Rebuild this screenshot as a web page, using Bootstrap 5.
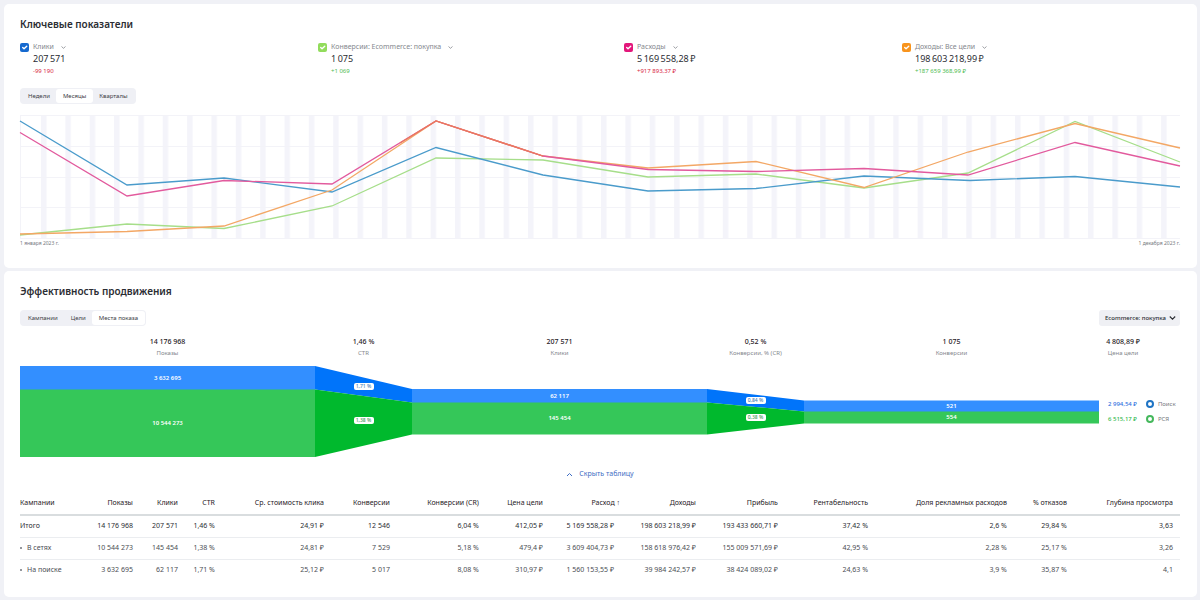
<!DOCTYPE html>
<html lang="ru">
<head>
<meta charset="utf-8">
<meta name="viewport" content="width=device-width, initial-scale=1">
<title>Ключевые показатели</title>
<link href="https://cdn.jsdelivr.net/npm/bootstrap@5.3.0/dist/css/bootstrap.min.css" rel="stylesheet">
<style>
  body { background: #f0f1f6; color: #2b2d33; font-family: "Noto Sans", "Open Sans", sans-serif; font-size: 7px; line-height: 10px; }
  .page { padding: 4px 3px 3px 4px; gap: 3px; }
  .panel { border: 0; border-radius: 5px; padding: 12px 17px 16px 16px; color: inherit; }
  .panel-title { font-size: 10px; line-height: 16px; font-weight: 600; margin: 0; color: #2b2d33; }

  .metrics { display: grid; grid-template-columns: 298fr 306fr 278fr 278fr; margin-top: 10px; }
  .metric { display: grid; grid-template-columns: 9px auto; column-gap: 4px; justify-content: start; }
  .metric .form-check-input { width: 9px; height: 9px; margin: 1px 0 0; border: 0; border-radius: 2px; background-color: var(--tone); background-size: 9px 9px; }
  .metric-name { color: #85888e; gap: 7px; }
  .metric-name button { color: inherit; line-height: 10px; }
  .metric-value { grid-column: 2; font-size: 9px; line-height: 13px; }
  .metric-delta { grid-column: 2; font-size: 6px; line-height: 12px; }
  .down { color: #d8283f; }
  .up { color: #4dbb50; }

  .switch { background: #eff0f5; border-radius: 4px; height: 16px; padding: 1px; }
  .switch .btn { font-size: 6px; line-height: 14px; padding: 0 7px; border: 0; border-radius: 3px !important; color: #3d4046; flex: none; }
  .switch .btn.active { background: #fff; color: #3d4046; }

  .chart { display: block; width: 100%; height: 124px; margin-top: 11px; overflow: visible; }
  .chart polyline { fill: none; stroke-width: 1.3; vector-effect: non-scaling-stroke; }
  .dates { font-size: 5px; line-height: 9px; color: #777a80; margin-bottom: 4px; }

  .goal { position: relative; height: 16px; }
  .goal select { appearance: none; border: 0; border-radius: 3px; background: #eff0f4; color: #2b2d33; height: 16px; width: 81px; padding: 0 12px 0 6px; font-size: 6px; font-weight: 500; line-height: 16px; }
  .goal svg { position: absolute; right: 4px; top: 5px; pointer-events: none; }

  .funnel { display: grid; grid-template-columns: 295fr 97fr 295fr 97fr 295fr 81px; margin-top: 10px; }
  .stage-head { text-align: center; margin-bottom: 8px; }
  .stage-head b { display: block; font-weight: 500; font-size: 7px; line-height: 12px; color: #1f2126; }
  .stage-head span { display: block; font-size: 6px; color: #85888e; }
  .stage-body { position: relative; height: 92px; }
  .stage-body svg { display: block; width: 100%; height: 92px; }
  .stage-label { position: absolute; left: 0; right: 0; text-align: center; color: #fff; font-size: 6px; line-height: 8px; font-weight: 600; }
  .stage-label.rate span { display: inline-block; background: #fff; border-radius: 2px; padding: 0 1px; font-size: 5px; line-height: 7px; min-width: 20px; color: #4a7fb5; font-weight: 500; vertical-align: top; }
  .stage-label.rate.net span { color: #3f9a5b; }
  .side-head { margin-right: 33px; }
  .legend-row { height: 15px; gap: 9px; padding-left: 9px; white-space: nowrap; font-size: 6px; }
  .legend-row > span:first-child { font-weight: 500; }
  .legends { padding-top: 30px; }
  .ring { width: 8px; height: 8px; border: 2px solid; border-radius: 50%; flex: none; }
  .legend-name { color: #777a80; gap: 4px; }

  .toggle-link { color: #3f6ec4; text-decoration: none; line-height: 12px; gap: 6px; }
  .stats { width: 100%; table-layout: fixed; margin: 11px 0 0; }
  .stats th, .stats td { padding: 0 7px 0 0; text-align: right; white-space: nowrap; font-weight: 400; height: 22px; line-height: 12px; vertical-align: middle; border-bottom: 1px solid #ebedf0; }
  .stats thead th { height: 24px; border-bottom: 2px solid #d9dddf; color: #1f2126; }
  .stats th:first-child { text-align: left; padding: 0; }
  .stats tbody tr:last-child td, .stats tbody tr:last-child th { border-bottom: 0; }
  .stats td:nth-child(9) { padding-right: 13px; }
  .stats .sub { color: #4b4e54; }
  .dot { display: inline-block; width: 2px; height: 2px; background: #94979d; vertical-align: middle; margin-right: 5px; }
</style>
</head>
<body>
<main class="page d-flex flex-column">

  <section class="panel card">
    <h1 class="panel-title">Ключевые показатели</h1>

    <div class="metrics">
      <div class="metric" style="--tone:#1569cf">
        <input class="form-check-input" type="checkbox" id="m1" checked>
        <div class="metric-name d-flex align-items-center"><label for="m1">Клики</label>
          <button class="btn p-0 border-0 d-flex" aria-label="Выбрать метрику"><svg width="5" height="3" viewBox="0 0 5 3"><path d="M.5.5l2 1.8 2-1.8" fill="none" stroke="#85888e" stroke-width=".8"/></svg></button></div>
        <div class="metric-value">207&thinsp;571</div>
        <div class="metric-delta down">-99 190</div>
      </div>
      <div class="metric" style="--tone:#92dc5c">
        <input class="form-check-input" type="checkbox" id="m2" checked>
        <div class="metric-name d-flex align-items-center"><label for="m2">Конверсии: Ecommerce: покупка</label>
          <button class="btn p-0 border-0 d-flex" aria-label="Выбрать метрику"><svg width="5" height="3" viewBox="0 0 5 3"><path d="M.5.5l2 1.8 2-1.8" fill="none" stroke="#85888e" stroke-width=".8"/></svg></button></div>
        <div class="metric-value">1&thinsp;075</div>
        <div class="metric-delta up">+1 069</div>
      </div>
      <div class="metric" style="--tone:#e3177b">
        <input class="form-check-input" type="checkbox" id="m3" checked>
        <div class="metric-name d-flex align-items-center"><label for="m3">Расходы</label>
          <button class="btn p-0 border-0 d-flex" aria-label="Выбрать метрику"><svg width="5" height="3" viewBox="0 0 5 3"><path d="M.5.5l2 1.8 2-1.8" fill="none" stroke="#85888e" stroke-width=".8"/></svg></button></div>
        <div class="metric-value">5&thinsp;169&thinsp;558,28&thinsp;₽</div>
        <div class="metric-delta down">+917 893,37 ₽</div>
      </div>
      <div class="metric" style="--tone:#f8941d">
        <input class="form-check-input" type="checkbox" id="m4" checked>
        <div class="metric-name d-flex align-items-center"><label for="m4">Доходы: Все цели</label>
          <button class="btn p-0 border-0 d-flex" aria-label="Выбрать метрику"><svg width="5" height="3" viewBox="0 0 5 3"><path d="M.5.5l2 1.8 2-1.8" fill="none" stroke="#85888e" stroke-width=".8"/></svg></button></div>
        <div class="metric-value">198&thinsp;603&thinsp;218,99&thinsp;₽</div>
        <div class="metric-delta up">+187 659 368,99 ₽</div>
      </div>
    </div>

    <div class="switch btn-group align-self-start" style="margin-top:11px" role="group" aria-label="Период">
      <button type="button" class="btn">Недели</button>
      <button type="button" class="btn active">Месяцы</button>
      <button type="button" class="btn">Кварталы</button>
    </div>

    <svg class="chart" viewBox="20 115 1160 124" preserveAspectRatio="none" role="img" aria-label="Динамика показателей">
      <defs>
        <pattern id="weekends" x="41" y="115" width="24.35" height="124" patternUnits="userSpaceOnUse"><rect width="5.5" height="124" fill="#f4f4fa"/></pattern>
      </defs>
      <rect x="41" y="115" width="1139" height="124" fill="url(#weekends)"/>
      <path d="M20 115.5H1180M20 146.500H1180M20 177.500H1180M20 207.500H1180M20 238.500H1180M20.500 115V239" stroke="#f3f3f8" fill="none"/>
      <polyline stroke="#a6de8a" points="20,235 127,224 224,228.500 332,206 436,158 543,160 648,177 756,174 864,188 968,173 1075,121.500 1180,162"/>
      <polyline stroke="#4a9bcb" points="20,121 127,185 224,178 332,192 436,147.500 543,175 648,191 756,188.500 864,176 970,180.500 1075,176.500 1180,187"/>
      <polyline stroke="#f3a765" points="20,234 127,231.500 224,226 332,190 436,121 543,156 648,168 756,161.500 864,187.500 968,152 1075,123.500 1180,148"/>
      <polyline stroke="#e25a9d" points="20,132.500 127,196 224,180.500 332,184 436,121 543,156 648,169.500 756,171.500 864,168.500 968,175 1075,142.500 1180,166"/>
      <polyline stroke="#ea7a5c" points="400,143 436,121 543,156"/>
    </svg>
    <div class="dates d-flex justify-content-between"><span>1 января 2023 г.</span><span>1 декабря 2023 г.</span></div>
  </section>

  <section class="panel card">
    <h2 class="panel-title">Эффективность продвижения</h2>

    <div class="d-flex justify-content-between" style="margin-top:11px">
      <div class="switch btn-group" role="group" aria-label="Разрез">
        <button type="button" class="btn">Кампании</button>
        <button type="button" class="btn">Цели</button>
        <button type="button" class="btn active">Места показа</button>
      </div>
      <div class="goal">
        <select aria-label="Цель"><option>Ecommerce: покупка</option></select>
        <svg width="7" height="6" viewBox="0 0 7 6"><path d="M.8 1.500l2.700 2.700 2.700-2.700" fill="none" stroke="#2b2d33" stroke-width="1.100"/></svg>
      </div>
    </div>

    <div class="funnel">
      <div>
        <div class="stage-head"><b>14 176 968</b><span>Показы</span></div>
        <div class="stage-body">
          <svg viewBox="0 0 100 92" preserveAspectRatio="none"><path fill="#338fff" d="M0 0H100V24H0z"/><path fill="#35c759" d="M0 23.500H100V91H0z"/></svg>
          <div class="stage-label" style="top:8px">3 632 695</div>
          <div class="stage-label" style="top:53px">10 544 273</div>
        </div>
      </div>
      <div>
        <div class="stage-head"><b>1,46 %</b><span>CTR</span></div>
        <div class="stage-body">
          <svg viewBox="0 0 100 92" preserveAspectRatio="none"><path fill="#0074fa" d="M0 0L100 23V36.500L0 23.500z"/><path fill="#00b92d" d="M0 23.500L100 36.500V68.500L0 91z"/></svg>
          <div class="stage-label rate" style="top:17px"><span>1,71 %</span></div>
          <div class="stage-label rate net" style="top:51px"><span>1,38 %</span></div>
        </div>
      </div>
      <div>
        <div class="stage-head"><b>207 571</b><span>Клики</span></div>
        <div class="stage-body">
          <svg viewBox="0 0 100 92" preserveAspectRatio="none"><path fill="#338fff" d="M0 23H100V37H0z"/><path fill="#35c759" d="M0 36.500H100V68.500H0z"/></svg>
          <div class="stage-label" style="top:26px">62 117</div>
          <div class="stage-label" style="top:48px">145 454</div>
        </div>
      </div>
      <div>
        <div class="stage-head"><b>0,52 %</b><span>Конверсии, % (CR)</span></div>
        <div class="stage-body">
          <svg viewBox="0 0 100 92" preserveAspectRatio="none"><path fill="#0074fa" d="M0 23L100 34.500V45.500L0 36.500z"/><path fill="#00b92d" d="M0 36.500L100 45.500V57.500L0 68.500z"/></svg>
          <div class="stage-label rate" style="top:31px"><span>0,84 %</span></div>
          <div class="stage-label rate net" style="top:48px"><span>0,38 %</span></div>
        </div>
      </div>
      <div>
        <div class="stage-head"><b>1 075</b><span>Конверсии</span></div>
        <div class="stage-body">
          <svg viewBox="0 0 100 92" preserveAspectRatio="none"><path fill="#338fff" d="M0 34.500H100V46H0z"/><path fill="#35c759" d="M0 45.500H100V57.500H0z"/></svg>
          <div class="stage-label" style="top:36px">521</div>
          <div class="stage-label" style="top:47px">554</div>
        </div>
      </div>
      <div>
        <div class="stage-head side-head"><b>4 808,89 ₽</b><span>Цена цели</span></div>
        <div class="legends">
          <div class="legend-row d-flex align-items-center"><span style="color:#2f6fe0">2 994,54 ₽</span><span class="legend-name d-flex align-items-center"><i class="ring" style="border-color:#1f74c4"></i>Поиск</span></div>
          <div class="legend-row d-flex align-items-center"><span style="color:#2fb84c">6 515,17 ₽</span><span class="legend-name d-flex align-items-center"><i class="ring" style="border-color:#45b85c"></i>РСЯ</span></div>
        </div>
      </div>
    </div>

    <div class="text-center d-flex justify-content-center" style="margin-top:10px">
      <a href="#stats" class="toggle-link d-inline-flex align-items-center"><svg width="7" height="5" viewBox="0 0 7 5"><path d="M1 4l2.500-2.500L6 4" fill="none" stroke="#3f6ec4"/></svg>Скрыть таблицу</a>
    </div>

    <table class="stats" id="stats">
      <colgroup>
        <col style="width:4.74%"><col style="width:5.6%"><col style="width:3.88%"><col style="width:3.19%"><col style="width:9.4%"><col style="width:5.69%"><col style="width:7.67%"><col style="width:5.52%"><col style="width:6.64%"><col style="width:6.55%"><col style="width:7.07%"><col style="width:7.76%"><col style="width:11.98%"><col style="width:5.17%"><col style="width:9.14%">
      </colgroup>
      <thead>
        <tr><th scope="col">Кампании</th><th scope="col">Показы</th><th scope="col">Клики</th><th scope="col">CTR</th><th scope="col">Ср. стоимость клика</th><th scope="col">Конверсии</th><th scope="col">Конверсии (CR)</th><th scope="col">Цена цели</th><th scope="col">Расход ↑</th><th scope="col">Доходы</th><th scope="col">Прибыль</th><th scope="col">Рентабельность</th><th scope="col">Доля рекламных расходов</th><th scope="col">% отказов</th><th scope="col">Глубина просмотра</th></tr>
      </thead>
      <tbody>
        <tr><th scope="row">Итого</th><td>14 176 968</td><td>207 571</td><td>1,46 %</td><td>24,91 ₽</td><td>12 546</td><td>6,04 %</td><td>412,05 ₽</td><td>5 169 558,28 ₽</td><td>198 603 218,99 ₽</td><td>193 433 660,71 ₽</td><td>37,42 %</td><td>2,6 %</td><td>29,84 %</td><td>3,63</td></tr>
        <tr class="sub"><th scope="row"><i class="dot"></i>В сетях</th><td>10 544 273</td><td>145 454</td><td>1,38 %</td><td>24,81 ₽</td><td>7 529</td><td>5,18 %</td><td>479,4 ₽</td><td>3 609 404,73 ₽</td><td>158 618 976,42 ₽</td><td>155 009 571,69 ₽</td><td>42,95 %</td><td>2,28 %</td><td>25,17 %</td><td>3,26</td></tr>
        <tr class="sub"><th scope="row"><i class="dot"></i>На поиске</th><td>3 632 695</td><td>62 117</td><td>1,71 %</td><td>25,12 ₽</td><td>5 017</td><td>8,08 %</td><td>310,97 ₽</td><td>1 560 153,55 ₽</td><td>39 984 242,57 ₽</td><td>38 424 089,02 ₽</td><td>24,63 %</td><td>3,9 %</td><td>35,87 %</td><td>4,1</td></tr>
      </tbody>
    </table>
  </section>
</main>
<script src="https://cdn.jsdelivr.net/npm/bootstrap@5.3.0/dist/js/bootstrap.bundle.min.js"></script>
</body>
</html>
